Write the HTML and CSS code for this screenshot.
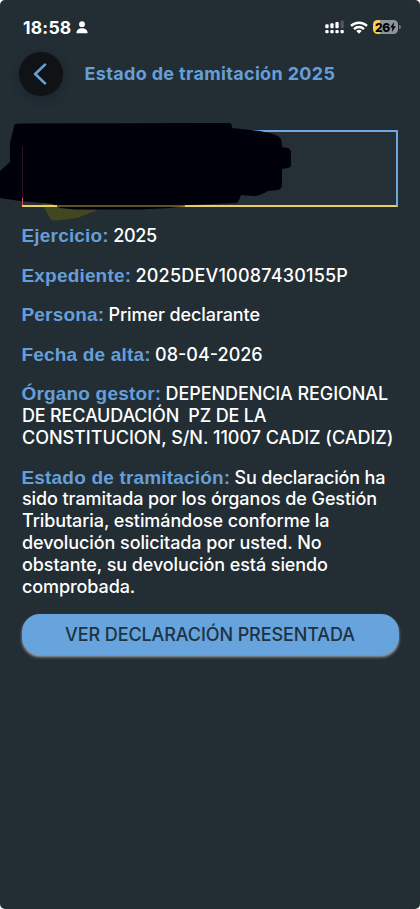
FILE: index.html
```
<!DOCTYPE html>
<html lang="es">
<head>
<meta charset="utf-8">
<title>Estado de tramitación 2025</title>
<link rel="stylesheet" href="styles.css">
</head>
<body>
<div class="screen">
  <div class="status">
    <span class="time">18:58</span>
    <svg class="person" width="12" height="13" viewBox="0 0 12 13" fill="#fff"><circle cx="6" cy="3.2" r="2.9"/><path d="M.4 12.3C.4 9 2.8 7.3 6 7.3s5.600 1.700 5.600 5z"/></svg>
    <svg class="signal" width="20" height="14" viewBox="0 0 20 14" fill="#fff"><rect x=".3" y="4.300" width="3.300" height="4" rx="1"/><rect x="5.300" y="3.300" width="3.300" height="5" rx="1"/><rect x="10.400" y="2" width="3.300" height="6.300" rx="1"/><rect x="15.500" y=".5" width="3.300" height="7.800" rx="1" fill="#4d575c"/><rect x=".3" y="10" width="3.300" height="3.200" rx="1"/><rect x="5.300" y="10" width="3.300" height="3.200" rx="1"/><rect x="10.400" y="10" width="3.300" height="3.200" rx="1"/><rect x="15.500" y="10" width="3.300" height="3.200" rx="1"/></svg>
    <svg class="wifi" width="18" height="13" viewBox="0 0 18 13" fill="none" stroke="#fff" stroke-width="2.500"><path d="M1 4.900a11.500 11.500 0 0 1 16 0"/><path d="M4 8.100a7.200 7.200 0 0 1 10 0"/><path d="M9 12.800 6.300 10.100a3.800 3.800 0 0 1 5.400 0z" fill="#fff" stroke="none"/></svg>
    <div class="battery"><span>26</span><svg width="6" height="10" viewBox="0 0 6 10"><path d="M4 0 .2 5.600h2.200L1.900 10 5.800 4.200H3.500z"/></svg></div>
  </div>
  <header class="header">
    <div class="back"><svg width="14" height="22" viewBox="0 0 14 22" fill="none" stroke="#669fd8" stroke-width="2.700" stroke-linecap="round" stroke-linejoin="round"><path d="M12 1.600 2.200 11l9.800 9.400"/></svg></div>
    <h1>Estado de tramitación 2025</h1>
  </header>
  <div class="idbox">
    <svg class="marker" width="300" height="106" viewBox="0 0 300 106">
      <path d="M41 84 50 100Q51 103 58 102.500L77 100 98 92 80 86z" fill="#43471f"/>
      <path class="stroke" d="M14 8.500Q14 5.500 19 5.500L210 5h19q3 0 3 5l19 2q17 2 27 6 4 2 4 11l6 1q3 1 3 5v12q0 3-4 3l-5 1v15q0 5-4 6l-10 1q-8 5-15 5l-12-1q-1 4-4 8L190 87 170 90 140 91.500H75L60 90 52 86 20 83 0 80V53L10 44V25z" fill="#00000b"/>
      <path d="M22.500 28V80" stroke="#2c1722" stroke-width="1"/>
      <path d="M22.500 80V89" stroke="#c9545d" stroke-width="1"/>
      <path d="M22 88H57M185 88H245" stroke="#edcd62" stroke-width="2"/>
      <path d="M57 88H185" stroke="#806b35" stroke-width="1.500"/>
    </svg>
  </div>
  <main class="details">
    <p><b>Ejercicio:</b> <span class="year">2025</span></p>
    <p><b>Expediente:</b> <span class="file-number">2025DEV10087430155P</span></p>
    <p><b>Persona:</b> <span>Primer declarante</span></p>
    <p><b>Fecha de alta:</b> <span class="date">08-04-2026</span></p>
    <p><b>Órgano gestor:</b> <span>DEPENDENCIA REGIONAL</span><br><span class="tight">DE RECAUDACIÓN&nbsp; PZ DE LA</span><br><span class="address">CONSTITUCION, S/N. 11007 CADIZ (CADIZ)</span></p>
    <p><b>Estado de tramitación:</b> <span class="tight">Su declaración ha</span><br><span>sido tramitada por los órganos de Gestión</span><br><span>Tributaria, estimándose conforme la</span><br><span>devolución solicitada por usted. No</span><br><span>obstante, su devolución está siendo</span><br><span>comprobada.</span></p>
  </main>
  <button class="cta">VER DECLARACIÓN PRESENTADA</button>
</div>
</body>
</html>
```
FILE: styles.css
```
* { box-sizing: border-box; }
body { margin: 0; background: #fff; font-family: Inter, "Liberation Sans", sans-serif; }
.screen { width: 420px; height: 909px; background: #222d34; border-radius: 5px; overflow: hidden; }
.status { height: 51px; padding: 3px 22px 0 23px; display: flex; align-items: center; color: #fff; }
.time { font-size: 17.500px; font-weight: 700; letter-spacing: .2px; width: 49px; white-space: nowrap; }
.person { margin-left: 4px; }
.signal { margin-left: auto; }
.wifi { margin-left: 5px; }
.battery { position: relative; margin-left: 5px; width: 25px; height: 14px; border-radius: 4.500px; background: linear-gradient(90deg, #f5d04c 7px, #8e9397 7px); color: #000; display: flex; align-items: center; justify-content: center; font-size: 12px; font-weight: 800; letter-spacing: -.2px; }
.battery::after { content: ""; position: absolute; left: 26px; top: 5px; width: 1.500px; height: 4px; border-radius: 0 2px 2px 0; background: #6d767b; }
.header { height: 46px; padding-left: 18px; display: flex; align-items: center; }
.back { width: 46px; height: 46px; border-radius: 50%; background: #101315; border: 1px solid #22282c; box-shadow: 0 4px 8px rgba(20,30,40,.35); display: flex; align-items: center; justify-content: center; padding-right: 2px; }
h1 { margin: 0 0 0 20.500px; font-size: 18px; line-height: 22px; font-weight: 700; color: #669fd8; white-space: nowrap; letter-spacing: .34px; }
.idbox { position: relative; margin: 33px 22px 0 22px; height: 77px; border: 2px solid #6fa8dc; border-left: 1px solid #c9545d; border-bottom-color: #edcd62; background: #253036; }
.marker { position: absolute; left: -23px; top: -14px; }
.stroke { filter: blur(.5px); }
.details { padding: 18px 0 0 22px; font-size: 18px; line-height: 21.800px; color: #fff; font-weight: 500; white-space: nowrap; }
.details p { margin: 0 0 17.800px; }
.details b { font: 700 19px/18px "Liberation Sans", Arial, sans-serif; letter-spacing: .18px; margin: 0 -.5px 0 -.5px; color: #669fd8; }
.details span { letter-spacing: -.09px; }
.details .year { letter-spacing: -.3px; }
.details .file-number { letter-spacing: .2px; }
.details .date { letter-spacing: 0; }
.details .tight { letter-spacing: -.18px; }
.details .address { letter-spacing: -.03px; }
.cta { display: block; width: 377px; height: 41px; margin: -1px 0 0 21.500px; padding: 0; border: 0; border-radius: 18px; background: #67a3dc; box-shadow: 0 2px 3px rgba(205,205,205,.75); color: #1d3341; font: 500 18px Inter, "Liberation Sans", sans-serif; letter-spacing: -.1px; white-space: nowrap; }
```
